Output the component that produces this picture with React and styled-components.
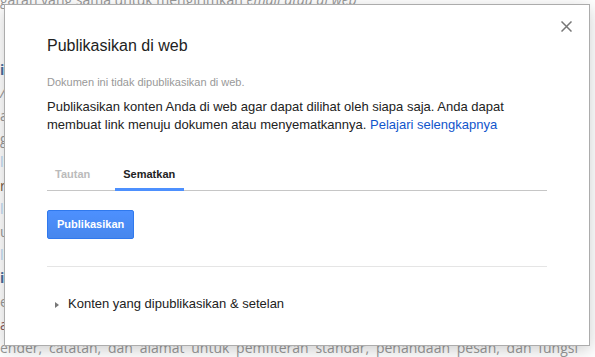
import styled, { createGlobalStyle } from "styled-components";

const GlobalStyle = createGlobalStyle`
  html, body {
    margin: 0;
    padding: 0;
  }
  body {
    width: 595px;
    height: 357px;
    overflow: hidden;
    background: #fff;
    font-family: "Liberation Sans", Arial, sans-serif;
  }
`;

const bgRows = [
  { text: "", color: "#999" },
  { text: "", color: "#999" },
  { text: "i", color: "#4a6f9c", bold: true },
  { text: "/", color: "#999", italic: true },
  { text: "a", color: "#999" },
  { text: "g", color: "#999" },
  { text: "l", color: "#b8d4f0" },
  { text: "r", color: "#7a5a40" },
  { text: "l", color: "#b8d4f0" },
  { text: "u", color: "#999" },
  { text: "l", color: "#b8d4f0" },
  { text: "il", color: "#4a6f9c", bold: true },
  { text: "e", color: "#999" },
  { text: "a", color: "#8a5a5a" },
];

function Backdrop() {
  return (
    <BgText>
      <BgLine>
        garan yang sama untuk mengirimkan <em>email atau di web</em>
      </BgLine>
      {bgRows.map((row, i) => (
        <BgLine key={i} $color={row.color} $bold={row.bold} $italic={row.italic}>
          {row.text || "\u00a0"}
        </BgLine>
      ))}
      <BgJustified>
        ender, catatan, dan alamat untuk pemfiteran standar, penandaan pesan, dan fungsi
      </BgJustified>
    </BgText>
  );
}

function CloseIcon() {
  return (
    <svg width="11" height="11" viewBox="0 0 11 11">
      <path d="M0.5 0.5 L10.5 10.5 M10.5 0.5 L0.5 10.5" stroke="#777" strokeWidth="1.5" />
    </svg>
  );
}

function App() {
  return (
    <Page>
      <GlobalStyle />
      <Backdrop />
      <Dialog>
        <Close aria-label="Tutup">
          <CloseIcon />
        </Close>
        <Title>Publikasikan di web</Title>
        <Status>Dokumen ini tidak dipublikasikan di web.</Status>
        <Body>
          Publikasikan konten Anda di web agar dapat dilihat oleh siapa saja. Anda dapat
          membuat link menuju dokumen atau menyematkannya.{" "}
          <Link href="#">Pelajari selengkapnya</Link>
        </Body>
        <TabBar>
          <Tab>Tautan</Tab>
          <Tab $active>Sematkan</Tab>
        </TabBar>
        <PublishButton>Publikasikan</PublishButton>
        <Separator />
        <Disclosure>
          <Arrow />
          Konten yang dipublikasikan &amp; setelan
        </Disclosure>
      </Dialog>
    </Page>
  );
}

const Page = styled.div`
  position: relative;
  width: 595px;
  height: 357px;
  overflow: hidden;
`;

const BgText = styled.div`
  margin-top: -12px;
  font-family: "Open Sans", sans-serif;
  font-size: 14px;
  line-height: 23.2px;
  color: #999;
`;

const BgLine = styled.div`
  white-space: nowrap;
  color: ${(p) => p.$color || "inherit"};
  font-weight: ${(p) => (p.$bold ? "bold" : "normal")};
  font-style: ${(p) => (p.$italic ? "italic" : "normal")};
`;

const BgJustified = styled.div`
  width: 578px;
  text-align: justify;
  text-align-last: justify;
`;

const Dialog = styled.div`
  position: absolute;
  top: 4px;
  left: 4px;
  box-sizing: border-box;
  width: 586px;
  height: 342px;
  padding: 29px 42px 0;
  background: #fff;
  border: 1px solid #acacac;
  box-shadow: 0 4px 16px rgba(0, 0, 0, 0.2);
  color: #222;
`;

const Close = styled.div`
  position: absolute;
  top: 16px;
  right: 17px;
  width: 11px;
  height: 11px;
  cursor: pointer;
  svg {
    display: block;
  }
`;

const Title = styled.h1`
  margin: 0;
  font-size: 16px;
  line-height: 24px;
  font-weight: normal;
  color: #222;
`;

const Status = styled.div`
  margin-top: 16px;
  font-size: 11px;
  line-height: 16px;
  color: #999;
`;

const Body = styled.p`
  margin: 8px 0 0;
  font-size: 13px;
  line-height: 18px;
  color: #222;
`;

const Link = styled.a`
  color: #15c;
  text-decoration: none;
`;

const TabBar = styled.div`
  display: flex;
  gap: 16px;
  margin-top: 32px;
  border-bottom: 1px solid #c6c6c6;
`;

const Tab = styled.div`
  padding: 0 9px 6px 8px;
  margin-bottom: -1px;
  font-size: 11px;
  line-height: 16px;
  font-weight: bold;
  color: ${(p) => (p.$active ? "#222" : "#bbb")};
  border-bottom: 3px solid ${(p) => (p.$active ? "#4d90fe" : "transparent")};
  cursor: pointer;
`;

const PublishButton = styled.button`
  display: block;
  box-sizing: border-box;
  height: 29px;
  margin-top: 19px;
  padding: 0 9px;
  border: 1px solid #3079ed;
  border-radius: 2px;
  background: linear-gradient(#4d90fe, #4787ed);
  color: #fff;
  font-family: "Liberation Sans", Arial, sans-serif;
  font-size: 11px;
  font-weight: bold;
  line-height: 27px;
  cursor: pointer;
`;

const Separator = styled.div`
  margin-top: 27px;
  border-top: 1px solid #e5e5e5;
`;

const Disclosure = styled.div`
  display: flex;
  align-items: center;
  margin-top: 28px;
  font-size: 13px;
  line-height: 18px;
  color: #222;
  cursor: pointer;
`;

const Arrow = styled.span`
  width: 0;
  height: 0;
  margin: 1px 9px 0 8px;
  border-left: 4px solid #777;
  border-top: 3.5px solid transparent;
  border-bottom: 3.5px solid transparent;
`;

export default App;
